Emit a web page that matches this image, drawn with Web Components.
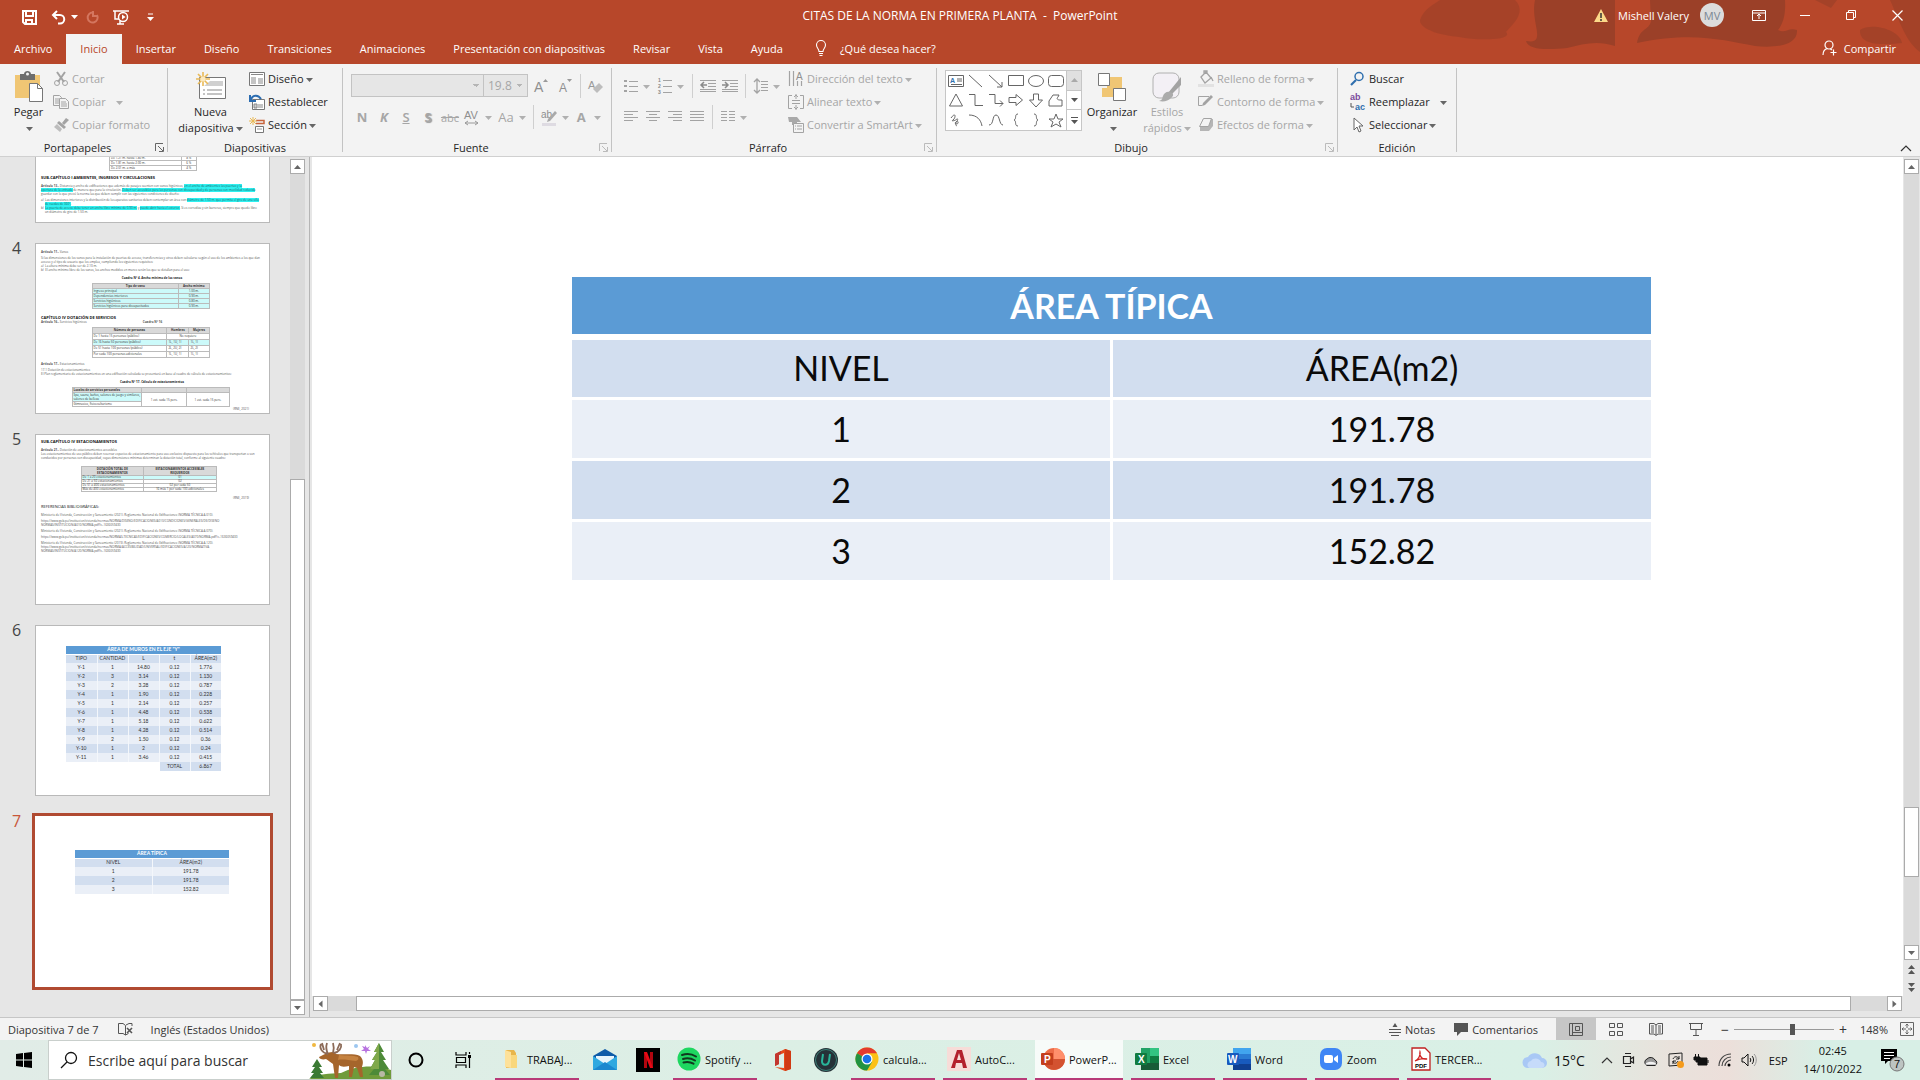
<!DOCTYPE html>
<html lang="es">
<head>
<meta charset="UTF-8">
<meta name="viewport" content="width=device-width, initial-scale=1">
<title>CITAS DE LA NORMA EN PRIMERA PLANTA - PowerPoint</title>
<style>
  html, body { height: 100%; margin: 0; }
  body {
    font-family: "Open Sans", "Noto Sans", sans-serif;
    font-size: 11px;
    color: #262626;
    background: #e6e6e6;
    overflow: hidden;
  }
</style>
</head>
<body>
<power-point></power-point>

<script>
// name: [width, height, markup]
const ICONS = {
  caret: [7, 4, '<path d="M0 0h7L3.500 4z" fill="currentColor"/>'],
  save: [15, 15, '<path d="M1 1h13v13H3l-2-2z M4 1v5h7V1 M4 14v-4h6v4" fill="none" stroke="#fff" stroke-width="2"/>'],
  undo: [15, 15, '<path d="M2 5h7a4 4 0 0 1 0 8.500H7" fill="none" stroke="#fff" stroke-width="2"/><path d="M6 1 2 5l4 4" fill="none" stroke="#fff" stroke-width="2"/>'],
  redo: [15, 15, '<path d="M8 2.500A5 5 0 1 0 12 5" fill="none" stroke="#d4765f" stroke-width="2"/><path d="M8 1v5h5" fill="none" stroke="#d4765f" stroke-width="2"/>'],
  present: [18, 17, '<path d="M1 2h16M3 2v8h5M5 15h7M8 12v3" fill="none" stroke="#fff" stroke-width="1.500"/><circle cx="11" cy="8" r="4.500" fill="#b7472a" stroke="#fff" stroke-width="1.500"/><path d="M10 5.500v5l3.500-2.500z" fill="#fff"/>'],
  more: [7, 8, '<path d="M1 1h5" stroke="#fff"/><path d="M0 4h7L3.500 8z" fill="#fff"/>'],
  warn: [14, 13, '<path d="M7 0l7 13H0z" fill="#fcd98a"/><path d="M7 4v5M7 10v2" stroke="#333" stroke-width="1.500"/>'],
  ribbonopt: [14, 11, '<path d="M.500.500h13v10H.500zM.500 3h13M7 9V4M5 6l2-2 2 2" fill="none" stroke="#fff"/>'],
  min: [11, 11, '<path d="M0 5.500h10" stroke="#fff"/>'],
  restore: [11, 11, '<path d="M.500 2.500h7v7h-7zM2.500 2V.500h7v7H8" fill="none" stroke="#fff"/>'],
  close: [11, 11, '<path d="M.500.500l10 10M10.500.500l-10 10" stroke="#fff" stroke-width="1.200"/>'],
  bulb: [12, 16, '<path d="M4 11.500C4 9 1.500 8 1.500 5a4.500 4.500 0 0 1 9 0c0 3-2.500 4-2.500 6.500zM4 13.500h4M4.500 15.500h3" fill="none" stroke="#fff" stroke-width="1.100"/>'],
  share: [15, 16, '<circle cx="7" cy="5" r="4" fill="none" stroke="#fff" stroke-width="1.200"/><path d="M1 15c0-4 2-6 4.500-6.500M8 9c1 .200 1.500.500 2 1M11.500 9.500v6M8.500 12.500h6" fill="none" stroke="#fff" stroke-width="1.200"/>'],
  paste: [30, 32, '<path d="M1 4h25v23H1z" fill="#f0c674"/><path d="M6 3h4c0-4 7-4 7 0h4v6H6z" fill="#6d6d6d"/><circle cx="13.500" cy="3" r="1.500" fill="#f3f3f3"/><path d="M15.500 12.500h8l5 5v13h-13z" fill="#fff" stroke="#777"/><path d="M23.500 12.500v5h5" fill="none" stroke="#777"/>'],
  cut: [16, 16, '<path d="M4 1l7 10M12 1L5 11" stroke="#a3a3a3" stroke-width="2"/><circle cx="4" cy="12" r="2.500" fill="none" stroke="#a3a3a3"/><circle cx="12" cy="12" r="2.500" fill="none" stroke="#a3a3a3"/>'],
  copy: [16, 16, '<path d="M.500 1.500h6l2 2v8h-8z" fill="#f3f3f3" stroke="#a3a3a3"/><path d="M2 5h4M2 7h4M2 9h4" stroke="#a3a3a3"/><path d="M6.500 4.500h6l3 3v7h-9z" fill="#f3f3f3" stroke="#a3a3a3"/><path d="M8 8h5M8 10h6M8 12h6" stroke="#a3a3a3"/>'],
  brush: [16, 16, '<path d="M13 1l3 2-5 5-2-2z" fill="#a3a3a3"/><path d="M6 4l7 6-2 2-7-6z" fill="#a3a3a3"/><path d="M4 7l5 5-2 3-6-5z" fill="#bdbdbd"/>'],
  newslide: [32, 30, '<path d="M4.500 5.500h26v21h-26z" fill="#fff" stroke="#777"/><path d="M15 9h13v5H9z" fill="#d0d0d0"/><path d="M8 18h2m2 0h15M8 22h2m2 0h15" stroke="#888"/><path d="M8 0v14M1 7h14M3 2l10 10M13 2L3 12" stroke="#e9b957" stroke-width="1.600"/><circle cx="8" cy="7" r="2.500" fill="#fbe9c0"/>'],
  layout: [16, 16, '<path d="M.500 1.500h15v13H.500z" fill="#fff" stroke="#777"/><path d="M2 3.500h12M9 8h5M9 10h5M9 12h5" stroke="#888"/><path d="M2 6h5v7H2z" fill="#c4c4c4"/>'],
  reset: [16, 16, '<path d="M3.500 5.500h12v10h-12z" fill="#fff" stroke="#777"/><path d="M5 10h3v4H5zM9 11h5M9 13h5" fill="#ccc" stroke="#888"/><path d="M2 6C3 1 9 0 12 5M1 1v6h6" fill="none" stroke="#2b6cb0" stroke-width="2"/>'],
  section: [16, 16, '<path d="M7 3.500h8v3H7" fill="none" stroke="#c8643c" stroke-width="1.500"/><path d="M6.500 9.500h8v6h-8z" fill="#fff" stroke="#777"/><path d="M8 12h5" stroke="#999"/><path d="M4 0v8M0 4h8M1 1l6 6M7 1L1 7" stroke="#e9b957"/>'],
  grow: [14, 16, '<text x="0" y="14" font-size="14" fill="#8f8f8f">A</text><path d="M9 4l2.500-3L14 4z" fill="#9a9a9a"/>'],
  shrink: [14, 16, '<text x="1" y="14" font-size="12" fill="#8f8f8f">A</text><path d="M9 1l2.500 3L14 1z" fill="#9a9a9a"/>'],
  eraser: [16, 16, '<text x="0" y="11" font-size="11" fill="#999">A</text><path d="M11 5l4 4-6 6-4-4z" fill="#bdbdbd"/>'],
  spacing: [16, 18, '<text x="0" y="11" font-size="11" fill="#8f8f8f">AV</text><path d="M1 15h13M4 13l-3 2 3 2M11 13l3 2-3 2" fill="none" stroke="#999"/>'],
  marker: [16, 18, '<text x="0" y="10" font-size="10" fill="#8f8f8f">ab</text><path d="M14 3l2 2-7 8-3 1 1-3z" fill="#a9a9a9"/><path d="M1 15h14v3H1z" fill="#dedbe2"/>'],
  bullets: [14, 14, '<path d="M0 1h3v2H0zM0 6h3v2H0zM0 11h3v2H0z" fill="#a3a3a3"/><path d="M5 2.500h9M5 7.500h9M5 12.500h9" stroke="#a3a3a3"/>'],
  numbers: [14, 18, '<g font-size="5" font-weight="700" fill="#888"><text x="0" y="5">1</text><text x="0" y="11">2</text><text x="0" y="17">3</text></g><path d="M5 3.500h9M5 9.500h9M5 15.500h9" stroke="#a3a3a3"/>'],
  outdent: [16, 14, '<path d="M0 1.500h16M8 4.500h8M8 7.500h8M0 10.500h16M0 12.500h16" stroke="#a3a3a3"/><path d="M7 6H1M4 3L1 6l3 3" fill="none" stroke="#8a8a8a" stroke-width="1.500"/>'],
  indent: [16, 14, '<path d="M0 1.500h16M8 4.500h8M8 7.500h8M0 10.500h16M0 12.500h16" stroke="#a3a3a3"/><path d="M0 6h6M3 3l3 3-3 3" fill="none" stroke="#8a8a8a" stroke-width="1.500"/>'],
  linespace: [14, 16, '<path d="M3 1v14M0 4l3-3 3 3M0 12l3 3 3-3" fill="none" stroke="#a3a3a3" stroke-width="1.300"/><path d="M7 3.500h7M7 6.500h7M7 9.500h7M7 12.500h7" stroke="#a3a3a3"/>'],
  left: [14, 14, '<path d="M0 1.500h14M0 4.500h9M0 7.500h14M0 10.500h9" stroke="#a3a3a3" stroke-width="1.200"/>'],
  center: [14, 14, '<path d="M0 1.500h14M3 4.500h8M0 7.500h14M3 10.500h8" stroke="#a3a3a3" stroke-width="1.200"/>'],
  right: [14, 14, '<path d="M0 1.500h14M5 4.500h9M0 7.500h14M5 10.500h9" stroke="#a3a3a3" stroke-width="1.200"/>'],
  justify: [14, 14, '<path d="M0 1.500h14M0 4.500h14M0 7.500h14M0 10.500h14" stroke="#a3a3a3" stroke-width="1.200"/>'],
  columns: [14, 14, '<path d="M0 1.500h6M0 4.500h6M0 7.500h6M0 10.500h6M8 1.500h6M8 4.500h6M8 7.500h6M8 10.500h6" stroke="#a3a3a3" stroke-width="1.200"/>'],
  textdir: [16, 16, '<path d="M1.500 0v15M5.500 0v15M9.500 10v5M13.500 10v5" stroke="#a3a3a3" stroke-width="1.200"/><text x="8" y="9" font-size="10" fill="#8f8f8f">A</text>'],
  textalign: [16, 16, '<path d="M4 1.500H.500v13H4M12 1.500h3.500v13H12" fill="none" stroke="#a3a3a3"/><path d="M8 0v5M6 3l2-2 2 2M8 11v5M6 13l2 2 2-2M4 6.500h8M4 9.500h8" fill="none" stroke="#a3a3a3"/>'],
  smartart: [16, 16, '<path d="M0 0h9l4 5H9v3H4V5H1z" fill="#a9a9a9"/><path d="M5.500 6.500h10v9h-10z" fill="#f3f3f3" stroke="#a3a3a3"/><path d="M7 9h1m1 0h5M7 12h1m1 0h5" stroke="#a3a3a3"/>'],
  arrange: [28, 28, '<path d="M9 4h15v14H9zM4 15h12v9H4z" fill="#f0c674"/><path d="M.500.500h11v12H.500zM15.500 15.500h12v12h-12z" fill="#fff" stroke="#777"/>'],
  styles: [30, 30, '<rect x="1" y="1" width="26" height="25" rx="6" fill="#f3f0f5" stroke="#b0b0b0"/><path d="M29 5v8L19 23l-3-2z" fill="#a3a3a3"/><path d="M18 20c4 1 4 4 1 6-3 3-7 4-12 3 4-1 3-3 4-5 1-3 4-5 7-4z" fill="#ababab"/>'],
  fill: [16, 16, '<path d="M3 6l5-5 5 6-6 5zM6 3V0h3v3M13 6l2 4" fill="none" stroke="#a3a3a3" stroke-width="1.300"/><path d="M0 13h16v3H0z" fill="#e2e2e2"/>'],
  outline: [16, 16, '<path d="M11 2.500H.500v9H4" fill="none" stroke="#a3a3a3"/><path d="M13 1l2 2-8 8-3 1 1-3z" fill="#a3a3a3"/>'],
  effects: [16, 16, '<path d="M5 2h10v7l-4 5H2V9z" fill="#b5b5b5"/><path d="M5.500 1.500h8l-3 8h-9z" fill="#f3f3f3" stroke="#a3a3a3"/>'],
  find: [16, 16, '<circle cx="9" cy="5.500" r="4" fill="none" stroke="#2f6fae" stroke-width="1.500"/><path d="M6 9l-5 5" stroke="#2f6fae" stroke-width="2.200"/>'],
  replace: [16, 20, '<text x="0" y="8" font-size="9" font-weight="700" fill="#7b4a9c">ab</text><text x="5" y="18" font-size="9" font-weight="700" fill="#2f6fae">ac</text><path d="M1 11v4h3" fill="none" stroke="#555"/>'],
  select: [16, 16, '<path d="M4 1v12l3-3 2 5 2-1-2-5h4z" fill="#fff" stroke="#666"/>'],
  launcher: [9, 9, '<path d="M8 .500H.500V8M3 3l5 5M8.500 4v4.500H4" fill="none" stroke="currentColor"/>'],
  chevron: [12, 7, '<path d="M1 6l5-5 5 5" fill="none" stroke="#333" stroke-width="1.200"/>'],
  spell: [15, 14, '<path d="M7.500 13L5 11.500H.500v-10H5l2.500 2zM8 3l3-1.500h3V4M7.500 13l3-1.500" fill="none" stroke="#555"/><path d="M9 6l5 5M14 6l-5 5" stroke="#555" stroke-width="1.600"/>'],
  notes: [12, 13, '<path d="M3.500 4L6 0l2.500 4z" fill="#555"/><path d="M0 6.500h12M0 9.500h12M2 12.500h8" stroke="#555"/>'],
  comment: [14, 13, '<path d="M0 0h14v9H7l-4 4V9H0z" fill="#555"/>'],
  normal: [14, 13, '<path d="M.500.500h13v12H.500zM3.500.500v12M6.500 3.500h4v4h-4zM3 9.500h10" fill="none" stroke="#555"/>'],
  sorter: [14, 13, '<path d="M.500.500h5v4h-5zM8.500.500h5v4h-5zM.500 8.500h5v4h-5zM8.500 8.500h5v4h-5z" fill="none" stroke="#555"/>'],
  reading: [14, 13, '<path d="M7 12.500L5 11H.500V.500H5l2 1.500 2-1.500h4.500V11H9zM7 2v10M2 3h3M2 5h3M2 7h3M2 9h3M9 3h3M9 5h3M9 7h3M9 9h3" fill="none" stroke="#555"/>'],
  show: [14, 13, '<path d="M0 .500h14M1.500.500v6h11v-6M7 7v5M4 12.500h6" fill="none" stroke="#555"/>'],
  fit: [14, 14, '<path d="M.500.500h13v13H.500zM7 2v4M7 8v4M2 7h4M8 7h4M5.500 3.500L7 2l1.500 1.500M5.500 10.500L7 12l1.500-1.500M3.500 5.500L2 7l1.500 1.500M10.500 5.500L12 7l-1.500 1.500" fill="none" stroke="#666"/>'],
  windows: [16, 16, '<path d="M0 2l7-1v6.500H0zM8 1l8-1v7.500H8zM0 8.500h7V15l-7-1zM8 8.500h8V16l-8-1z" fill="#000"/>'],
  search: [18, 18, '<circle cx="11" cy="7" r="5.500" fill="none" stroke="#111" stroke-width="1.300"/><path d="M7 11l-6 6" stroke="#111" stroke-width="1.300"/>'],
  cortana: [16, 16, '<circle cx="8" cy="8" r="6.500" fill="none" stroke="#000" stroke-width="2"/>'],
  taskview: [18, 16, '<path d="M1 0v3h10V0M1 16v-3h10v3M1.500 5.500h9v5h-9zM14.500 0v2M14.500 6v10" fill="none" stroke="#000" stroke-width="1.200"/><path d="M13 3h3v3h-3z"/>'],
  folder: [24, 24, '<path d="M7 3h8l2 3v15H7z" fill="#e8b64c"/><path d="M6 3l6 2v16l-6-1z" fill="#fde19a"/><path d="M12 8h6v13h-6z" fill="#f9d77c"/>'],
  mail: [26, 24, '<path d="M1 8L13 1l12 7v14H1z" fill="#0f5ba8"/><path d="M4 8h18v9H4z" fill="#e7f4fb"/><path d="M1 8l12 8 12-8v14H1z" fill="#2fa8e0"/><path d="M1 22l12-8 12 8z" fill="#1b87cf"/>'],
  netflix: [24, 24, '<path d="M0 0h24v24H0z"/><path d="M8 4h3v16H8zM14 4h3v16h-3z" fill="#b1060f"/><path d="M8 4h3l6 16h-3z" fill="#e50914"/>'],
  spotify: [24, 24, '<circle cx="12" cy="12" r="11.500" fill="#1ed760"/><path d="M5 8c5-1.500 10-1 14 1.500M6 12c4-1.200 8-.800 12 1.500M6.500 15.500c4-1 7-.500 10 1.200" fill="none" stroke="#10391f" stroke-width="2" stroke-linecap="round"/>'],
  office: [24, 24, '<path d="M4 6l10-5 6 2v18l-6 2-10-4 9 1V5L8 7v9l-4 2z" fill="#e64a19"/><path d="M14 1l6 2v18l-6 2z" fill="#d03a12"/><path d="M4 6l6-3v3L8 7v9l-4 2z" fill="#c2362f"/>'],
  ubadge: [24, 24, '<circle cx="12" cy="12" r="12" fill="#253238"/><circle cx="12" cy="12" r="10.500" fill="none" stroke="#3c7f76"/><path d="M9 6l-1 7c0 5 6 5 7 0l1-7" fill="none" stroke="#29b59a" stroke-width="2"/>'],
  chrome: [24, 24, '<circle cx="12" cy="12" r="11.500" fill="#fbc116"/><path d="M12 12L2 6.200A11.500 11.500 0 0 1 22 6.200H12z" fill="#e33b2e"/><path d="M2 6.200A11.500 11.500 0 0 0 12 23.500l5-8.600L12 12z" fill="#229342"/><circle cx="12" cy="12" r="5.500" fill="#fff"/><circle cx="12" cy="12" r="4.300" fill="#1a73e8"/>'],
  autocad: [24, 24, '<path d="M0 0h24v24H0z" fill="#f7dcd8"/><path d="M4 21L10 3h5l5 18h-4l-1-5H9l-1 5zM10 13h4l-2-7z" fill="#b3202c" fill-rule="evenodd"/>'],
  powerpoint: [24, 24, '<circle cx="13" cy="12" r="11" fill="#ed6c47"/><path d="M13 1a11 11 0 0 1 11 11H13z" fill="#ff8f6b"/><path d="M2 12h22a11 11 0 0 1-20 6z" fill="#d35230"/><rect y="6" width="12" height="12" rx="1" fill="#c43e1c"/><text x="3" y="16" font-size="10" font-weight="700" fill="#fff">P</text>'],
  excel: [24, 24, '<path d="M6 1h9v22H6z" fill="#21a366"/><path d="M15 1h9v8h-9z" fill="#33c481"/><path d="M15 9h9v7h-9z" fill="#107c41"/><path d="M6 16h18v7H6z" fill="#185c37"/><rect y="6" width="12" height="12" rx="1" fill="#107c41"/><text x="3" y="16" font-size="10" font-weight="700" fill="#fff">X</text>'],
  word: [24, 24, '<path d="M6 1h18v6H6z" fill="#41a5ee"/><path d="M6 7h18v5H6z" fill="#2b7cd3"/><path d="M6 12h18v5H6z" fill="#185abd"/><path d="M6 17h18v6H6z" fill="#103f91"/><rect y="6" width="12" height="12" rx="1" fill="#185abd"/><text x="1" y="16" font-size="10" font-weight="700" fill="#fff">W</text>'],
  zoom: [24, 24, '<rect x="1" y="1" width="22" height="22" rx="7" fill="#3f86f5"/><rect x="5" y="8" width="9" height="8" rx="2" fill="#fff"/><path d="M15 11l4-3v8l-4-3z" fill="#fff"/>'],
  pdf: [20, 24, '<path d="M1 1h13l5 5v17H1z" fill="#fff" stroke="#c02020" stroke-width="1.300"/><path d="M4 14c3-1 6-6 5-9-1 5 3 8 7 7-4-1-8 0-12 2z" fill="none" stroke="#d02020" stroke-width="1.300"/><text x="4" y="21" font-size="6" font-weight="700">PDF</text>'],
  cloud: [26, 18, '<path d="M6 17a5.500 5.500 0 0 1 0-11 8 8 0 0 1 14 1 5 5 0 0 1 0 10z" fill="#a9c8f5"/><path d="M8 17c-3 0-4-6 1-7 2-4 9-3 10 1 4 0 5 5 1 6z" fill="#c6dbfa"/>'],
  meet: [12, 16, '<path d="M3 1.500h6M3 14.500h6M1.500 4.500h7v7h-7zM8.500 7l3-2v6l-3-2" fill="none" stroke="#222" stroke-width="1.200"/>'],
  onedrive: [16, 11, '<path d="M4 10.500a3.500 3.500 0 0 1 0-6.500 5 5 0 0 1 8 1 3 3 0 0 1 0 5.500z" fill="#999" stroke="#222"/><path d="M2 9.500c2-3 8-4 12 0z" fill="#f4f4f4"/>'],
  sync: [16, 16, '<path d="M1 2l13-1v12l-13 1z" fill="none" stroke="#222"/><path d="M5 7c1-3 5-3 6 0M10 9c-1 3-5 3-5 0M11 4v3H8M5 12V9h3" fill="none" stroke="#222"/><circle cx="12.500" cy="12.500" r="3.500" fill="#f59b1c"/>'],
  battery: [16, 12, '<path d="M5 4h9v7H5zM15 6v3" fill="#111" stroke="#111"/><path d="M2.500 0v3M5.500 0v3M1 3h6v3H5v2H3V6H1z" fill="#111" stroke="#111"/>'],
  wifi: [14, 14, '<path d="M1 13C1 6 6 1 13 1M4 13c0-5 4-9 9-9M7 13c0-3 3-6 6-6" fill="none" stroke="#444" stroke-width="1.200"/><circle cx="11" cy="12" r="1.500"/>'],
  volume: [16, 14, '<path d="M1 5v4h2l4 4V1L3 5z" fill="none" stroke="#111"/><path d="M9 5c1 1 1 3 0 4M11 3c2 2 2 6 0 8" fill="none" stroke="#111"/><path d="M13 1c3 3 3 9 0 12" fill="none" stroke="#999"/>'],
  notify: [26, 24, '<path d="M1 1h16v12h-9l-3 3v-3H1z"/><path d="M4 4.500h10M4 7.500h10M4 10.500h6" stroke="#fff"/><circle cx="17" cy="16" r="7" fill="#bdc4c2" stroke="#777"/><text x="14" y="20" font-size="11" fill="#111">7</text>'],
  moose: [82, 38, '<path d="M0 38c10-6 20-5 32-6 16-8 36-8 50-3v9z" fill="#6f9b3a"/><path d="M8 18l5 8h-3l4 6h-3l4 5H1l4-5H2l4-6H3z" fill="#3b7a34"/><path d="M70 2l5 9h-3l5 8h-3l6 9h-4l5 6H60l5-6h-4l5-9h-3l5-8h-3z" fill="#4d8a38"/><path d="M70 2l-5 9h3l-5 8h3l-5 9h9z" fill="#7fa84a"/><path d="M16 13c5-2 9-3 11 0 8 1 18-1 24 2 4 4 3 8 2 11l1 10h-3l-3-9-3-1-2 10h-3V25c-5 1-8 1-10-1l-1 13h-3l-2-14c-3-2-5-4-7-5-3 1-7 0-7-2z" fill="#a5652b"/><path d="M30 14c8 1 14 0 19 2 1 2 0 3-2 4-8-1-14-2-18-1z" fill="#c58240"/><path d="M19 13C13 12 10 7 12 3M19 13c-2-4-2-8-1-11M15 9l-2-7M25 12c5-1 8-5 7-9M24 12c1-4 1-7 0-10M28 9l3-7" fill="none" stroke="#8c6b58" stroke-width="1.800"/><circle cx="5" cy="4" r="2" fill="#f0b840"/><circle cx="47" cy="5" r="2" fill="#9cc7f0"/><path d="M56 4l2 3 3-2-2 3 3 2-4 0-1 3-1-3-4 0 3-2-2-3 3 1z" fill="#b873e0"/><circle cx="73" cy="33" r="3" fill="#b8b8a4"/>'],
  // shapes gallery
  g_text: [16, 12, '<path d="M.500.500h15v11H.500zM9 4h5M9 6h5M3 9.500h11" fill="none" stroke="#666"/><text x="2" y="8" font-size="7" font-weight="700" fill="#2f6fae">A</text>'],
  g_line: [16, 14, '<path d="M1 1l13 12" stroke="#666"/>'],
  g_arrow: [16, 14, '<path d="M1 1l13 12M14 8v5H9" fill="none" stroke="#666"/>'],
  g_rect: [16, 12, '<path d="M.500.500h15v10H.500z" fill="none" stroke="#666"/>'],
  g_oval: [16, 12, '<ellipse cx="8" cy="6" rx="7.500" ry="5.500" fill="none" stroke="#666"/>'],
  g_round: [16, 12, '<rect x=".500" y=".500" width="15" height="11" rx="3" fill="none" stroke="#666"/>'],
  g_tri: [16, 14, '<path d="M8 1l6.500 12h-13z" fill="none" stroke="#666"/>'],
  g_elbow: [16, 14, '<path d="M1 1.500h6v11h8" fill="none" stroke="#666"/>'],
  g_elbow2: [16, 14, '<path d="M1 1.500h6v9h8M12 7.500l3 3-3 3" fill="none" stroke="#666"/>'],
  g_right: [16, 14, '<path d="M1 4.500h7v-3l6.500 5.500L8 12.500v-3H1z" fill="none" stroke="#666"/>'],
  g_down: [16, 15, '<path d="M5.500 1v6h-4L8 14l6.500-7h-4V1z" fill="none" stroke="#666"/>'],
  g_free: [16, 14, '<path d="M1 8l4-6h6l-1 2c-2 2 0 3 2 3h2v6H1z" fill="none" stroke="#666"/>'],
  g_scrib: [16, 14, '<path d="M3 5c5-7 5 0 2 2s4 0 4-1 2 1-1 3 3 3 2 0-4 3-1 4" fill="none" stroke="#666"/>'],
  g_arc: [16, 14, '<path d="M1 2c8 0 12 5 13 11" fill="none" stroke="#666"/>'],
  g_curve: [16, 14, '<path d="M1 12C6 12 4 2 8 2s3 10 7 10" fill="none" stroke="#666"/>'],
  g_lbrace: [16, 14, '<path d="M10 1c-4 0-1 5-4 6 3 1 0 6 4 6" fill="none" stroke="#666"/>'],
  g_rbrace: [16, 14, '<path d="M6 1c4 0 1 5 4 6-3 1 0 6-4 6" fill="none" stroke="#666"/>'],
  g_star: [16, 15, '<path d="M8 1l2 5h5l-4 3 2 5-5-3-5 3 2-5-4-3h5z" fill="none" stroke="#666"/>']
};

class UiIcon extends HTMLElement {
  constructor() {
    super();
    this.attachShadow({ mode: "open" });
  }

  connectedCallback() {
    const [w, h, body] = ICONS[this.getAttribute("name")];
    this.shadowRoot.innerHTML = `
      <style>
        :host { display: inline-flex; flex: none; vertical-align: middle; }
        svg { display: block; overflow: visible; font-family: "Liberation Sans", sans-serif; }
      </style>
      <svg width="${w}" height="${h}" viewBox="0 0 ${w} ${h}" aria-hidden="true">${body}</svg>
    `;
  }
}
customElements.define("ui-icon", UiIcon);

const icon = (name) => `<ui-icon name="${name}"></ui-icon>`;

class TitleBar extends HTMLElement {
  constructor() {
    super();
    this.attachShadow({ mode: "open" });
  }

  connectedCallback() {
    this.shadowRoot.innerHTML = `
      <style>
        :host { display: block; color: white; }
        .bar { display: grid; grid-template-columns: 1fr auto 1fr; align-items: center; height: 34px; }
        button { border: 0; padding: 0; background: none; color: inherit; font: inherit; display: flex; align-items: center; justify-content: center; }
        .quick { display: flex; align-items: center; padding: 0 20px; height: 32px; }
        .quick button { width: 18px; height: 20px; }
        .quick .undo { width: 36px; margin-left: 8px; gap: 5px; }
        .quick .redo { margin-left: 1px; }
        .quick .show { margin-left: 11px; }
        .quick .more { margin-left: 11px; }
        h1 { margin: 0; font-size: 12px; line-height: 16px; font-weight: 400; white-space: pre; padding-bottom: 3px; }
        .user { display: flex; align-items: center; justify-content: flex-end; height: 30px; align-self: start; }
        .name { margin: 0 11px 0 10px; }
        .avatar { width: 24px; height: 24px; border-radius: 50%; background: #dcdcdc; color: #7a8794; margin-right: 12px; }
        .win { width: 46px; height: 30px; }
      </style>
      <div class="bar">
        <div class="quick">
          <button aria-label="Guardar">${icon("save")}</button>
          <button class="undo" aria-label="Deshacer">${icon("undo")}${icon("caret")}</button>
          <button class="redo" aria-label="Rehacer">${icon("redo")}</button>
          <button class="show" aria-label="Presentación desde el principio">${icon("present")}</button>
          <button class="more" aria-label="Personalizar">${icon("more")}</button>
        </div>
        <h1><slot></slot></h1>
        <div class="user">
          ${icon("warn")}
          <span class="name">Mishell Valery</span>
          <button class="avatar">MV</button>
          <button class="win" aria-label="Opciones de la cinta">${icon("ribbonopt")}</button>
          <button class="win" aria-label="Minimizar">${icon("min")}</button>
          <button class="win" aria-label="Restaurar">${icon("restore")}</button>
          <button class="win" aria-label="Cerrar">${icon("close")}</button>
        </div>
      </div>
    `;
  }
}
customElements.define("title-bar", TitleBar);

class TabStrip extends HTMLElement {
  constructor() {
    super();
    this.attachShadow({ mode: "open" });
  }

  connectedCallback() {
    const tabs = ["Archivo", "Inicio", "Insertar", "Diseño", "Transiciones", "Animaciones",
      "Presentación con diapositivas", "Revisar", "Vista", "Ayuda"];
    this.shadowRoot.innerHTML = `
      <style>
        :host { display: flex; height: 30px; color: white; }
        button { border: 0; background: none; color: inherit; font: inherit; padding: 0 14px 2px; display: flex; align-items: center; white-space: nowrap; }
        button.on { background: #f3f3f3; color: #b7472a; }
        .ask { margin-left: 4px; gap: 13px; }
        .share { margin-left: auto; padding-right: 24px; gap: 7px; }
      </style>
      ${tabs.map((t) => `<button role="tab" class="${t === "Inicio" ? "on" : ""}">${t}</button>`).join("")}
      <button class="ask">${icon("bulb")}¿Qué desea hacer?</button>
      <button class="share">${icon("share")}Compartir</button>
    `;
  }
}
customElements.define("tab-strip", TabStrip);

class RibbonButton extends HTMLElement {
  constructor() {
    super();
    this.attachShadow({ mode: "open" });
  }

  connectedCallback() {
    const name = this.getAttribute("icon");
    this.shadowRoot.innerHTML = `
      <style>
        :host { display: flex; }
        button {
          flex: 1; display: flex; align-items: center; height: 23px; gap: 3px; padding: 0 4px;
          border: 0; background: none; color: #262626; font: inherit; white-space: nowrap;
        }
        button:disabled { color: #a6a6a6; }
        .pic { display: flex; justify-content: center; flex: none; }
        :host([row]) .pic { width: 16px; }
        :host([tall]) button { flex-direction: column; height: 72px; gap: 0; padding: 2px 0 0; }
        :host([tall]) .pic { height: 35px; align-items: center; }
        :host([tall]) .text { line-height: 16px; }
        :host([tool]) button { justify-content: center; padding: 0; gap: 0; }
      </style>
      <button ${this.hasAttribute("disabled") ? "disabled" : ""} aria-label="${this.getAttribute("label") || this.textContent.trim()}">
        ${name ? `<span class="pic">${icon(name)}</span>` : ""}
        <span class="text"><slot></slot></span>
      </button>
    `;
  }
}
customElements.define("ribbon-button", RibbonButton);

class RibbonGroup extends HTMLElement {
  constructor() {
    super();
    this.attachShadow({ mode: "open" });
  }

  connectedCallback() {
    const launcher = this.getAttribute("launcher");
    this.shadowRoot.innerHTML = `
      <style>
        :host { display: flex; flex: none; height: 91px; box-sizing: border-box; padding: 3px 0 0; }
        .main { flex: 1; min-width: 0; display: flex; flex-direction: column; }
        .tools { flex: 1; display: flex; align-items: flex-start; }
        .foot { display: flex; align-items: center; height: 16px; }
        .foot span { flex: 1; text-align: center; }
        .foot button { width: 12px; padding: 0; border: 0; background: none; display: flex; color: #666; }
        .foot button.off { color: #bbb; }
        .rule { width: 1px; background: #c3c3c3; margin: 1px 0 3px; }
      </style>
      <div class="main">
        <div class="tools"><slot></slot></div>
        <div class="foot">
          <span>${this.getAttribute("name")}</span>
          ${launcher ? `<button class="${launcher}" aria-label="Más opciones">${icon("launcher")}</button>` : ""}
        </div>
      </div>
      <div class="rule"></div>
    `;
  }
}
customElements.define("ribbon-group", RibbonGroup);

class ShapeGallery extends HTMLElement {
  constructor() {
    super();
    this.attachShadow({ mode: "open" });
  }

  connectedCallback() {
    const shapes = ["text", "line", "arrow", "rect", "oval", "round", "tri", "elbow", "elbow2",
      "right", "down", "free", "scrib", "arc", "curve", "lbrace", "rbrace", "star"];
    this.shadowRoot.innerHTML = `
      <style>
        :host { display: flex; width: 137px; height: 61px; box-sizing: border-box; border: 1px solid #c6c6c6; background: white; }
        .grid { flex: 1; display: grid; grid-template: repeat(3, 1fr) / repeat(6, 1fr); }
        button { border: 0; padding: 0; background: none; display: flex; align-items: center; justify-content: center; color: #555; }
        .side { width: 15px; display: grid; grid-template-rows: repeat(3, 1fr); }
        .side button { border-left: 1px solid #c6c6c6; border-bottom: 1px solid #c6c6c6; }
        .side button:first-child { background: #e0e0e0; color: #aaa; }
        .side button:first-child ui-icon { rotate: 180deg; }
        .side button:last-child { border-bottom: 0; flex-direction: column; gap: 2px; }
        .side button:last-child::before { content: ""; width: 7px; height: 1px; background: #555; }
      </style>
      <div class="grid">${shapes.map((s) => `<button aria-label="Forma">${icon("g_" + s)}</button>`).join("")}</div>
      <div class="side">
        <button aria-label="Subir">${icon("caret")}</button>
        <button aria-label="Bajar">${icon("caret")}</button>
        <button aria-label="Más">${icon("caret")}</button>
      </div>
    `;
  }
}
customElements.define("shape-gallery", ShapeGallery);

class RibbonBar extends HTMLElement {
  constructor() {
    super();
    this.attachShadow({ mode: "open" });
  }

  connectedCallback() {
    const caret = icon("caret");
    this.shadowRoot.innerHTML = `
      <style>
        :host { display: flex; background: #f3f3f3; border-bottom: 1px solid #d0d0d0; padding-bottom: 1px; }
        .portapapeles { width: 168px; }
        .diapositivas { width: 175px; }
        .fuente { width: 269px; }
        .parrafo { width: 325px; }
        .dibujo { width: 401px; }
        .edicion { width: 119px; }
        .col { display: flex; flex-direction: column; align-items: stretch; }
        .rows { display: flex; flex-direction: column; gap: 8px; padding: 7px 0 0 8px; }
        .line { display: flex; align-items: center; height: 23px; }
        .sep { width: 1px; height: 24px; background: #cfcfcf; margin: 0 4px; }
        ui-icon[name="caret"] { margin-left: 2px; color: #666; }
        [disabled] ui-icon[name="caret"] { color: #b0b0b0; }
        [tool] ui-icon[name="caret"] { margin-left: 5px; }
        [tall] { text-align: center; }
        .paste { width: 49px; padding-left: 8px; box-sizing: border-box; }
        .new { width: 77px; padding-left: 8px; box-sizing: border-box; }
        .far { margin-left: 8px; }
        .w22 { width: 22px; }
        .w26 { width: 26px; }
        .w34 { width: 34px; }
        .letters { font-size: 13px; }
        .bold { font-weight: 700; }
        .it { font-weight: 700; font-style: italic; }
        .un { text-decoration: underline; font-weight: 600; }
        .sh { text-shadow: 1px 1px 1px #999; font-weight: 700; }
        .st { text-decoration: line-through; font-size: 11px; }
        select {
          height: 23px; width: 133px; box-sizing: border-box; border: 1px solid #c3c3c3; border-radius: 0;
          color: #a6a6a6; font: inherit; font-size: 12px; appearance: none; opacity: 1; padding: 0 4px;
          background: #e6e6e6 linear-gradient(to bottom left, #b5b5b5 50%, transparent 50%) right 7px center / 3px 3px no-repeat;
          background-image: linear-gradient(to bottom left, #b5b5b5 50%, transparent 50%), linear-gradient(to bottom right, #b5b5b5 50%, transparent 50%);
          background-position: right 7px center, right 4px center;
        }
        select.size { width: 45px; margin-left: -1px; }
        .art { margin: 3px 2px 0 8px; }
        .organize { width: 56px; }
        .styles { width: 54px; }
        .ed { margin-left: 8px; }
        .fold { margin: auto 8px 3px auto; border: 0; padding: 0; background: none; display: flex; }
      </style>

      <ribbon-group class="portapapeles" name="Portapapeles" launcher="on">
        <ribbon-button class="paste" tall icon="paste">Pegar<br>${caret}</ribbon-button>
        <div class="col">
          <ribbon-button row disabled icon="cut">Cortar</ribbon-button>
          <ribbon-button row disabled icon="copy">Copiar<span class="far">${caret}</span></ribbon-button>
          <ribbon-button row disabled icon="brush">Copiar formato</ribbon-button>
        </div>
      </ribbon-group>

      <ribbon-group class="diapositivas" name="Diapositivas">
        <ribbon-button class="new" tall icon="newslide">Nueva<br>diapositiva${caret}</ribbon-button>
        <div class="col">
          <ribbon-button row icon="layout">Diseño${caret}</ribbon-button>
          <ribbon-button row icon="reset">Restablecer</ribbon-button>
          <ribbon-button row icon="section">Sección${caret}</ribbon-button>
        </div>
      </ribbon-group>

      <ribbon-group class="fuente" name="Fuente" launcher="off">
        <div class="rows">
          <div class="line">
            <select disabled aria-label="Fuente"><option></option></select>
            <select class="size" disabled aria-label="Tamaño de fuente"><option>19.8</option></select>
            <ribbon-button class="w26" tool disabled icon="grow" label="Aumentar"></ribbon-button>
            <ribbon-button class="w22" tool disabled icon="shrink" label="Disminuir"></ribbon-button>
            <div class="sep"></div>
            <ribbon-button class="w22" tool disabled icon="eraser" label="Borrar formato"></ribbon-button>
          </div>
          <div class="line letters">
            <ribbon-button class="w22" tool disabled><span class="bold">N</span></ribbon-button>
            <ribbon-button class="w22" tool disabled><span class="it">K</span></ribbon-button>
            <ribbon-button class="w22" tool disabled><span class="un">S</span></ribbon-button>
            <ribbon-button class="w22" tool disabled><span class="sh">S</span></ribbon-button>
            <ribbon-button class="w22" tool disabled><span class="st">abc</span></ribbon-button>
            <ribbon-button class="w34" tool disabled icon="spacing" label="Espaciado">${caret}</ribbon-button>
            <ribbon-button class="w34" tool disabled>Aa${caret}</ribbon-button>
            <div class="sep"></div>
            <ribbon-button class="w34" tool disabled icon="marker" label="Resaltado">${caret}</ribbon-button>
            <ribbon-button class="w34" tool disabled><b>A</b>&nbsp;${caret}</ribbon-button>
          </div>
        </div>
      </ribbon-group>

      <ribbon-group class="parrafo" name="Párrafo" launcher="off">
        <div class="rows">
          <div class="line">
            <ribbon-button class="w34" tool disabled icon="bullets" label="Viñetas">${caret}</ribbon-button>
            <ribbon-button class="w34" tool disabled icon="numbers" label="Numeración">${caret}</ribbon-button>
            <div class="sep"></div>
            <ribbon-button class="w22" tool disabled icon="outdent" label="Reducir sangría"></ribbon-button>
            <ribbon-button class="w22" tool disabled icon="indent" label="Aumentar sangría"></ribbon-button>
            <div class="sep"></div>
            <ribbon-button class="w34" tool disabled icon="linespace" label="Interlineado">${caret}</ribbon-button>
          </div>
          <div class="line">
            <ribbon-button class="w22" tool disabled icon="left" label="Izquierda"></ribbon-button>
            <ribbon-button class="w22" tool disabled icon="center" label="Centrar"></ribbon-button>
            <ribbon-button class="w22" tool disabled icon="right" label="Derecha"></ribbon-button>
            <ribbon-button class="w22" tool disabled icon="justify" label="Justificar"></ribbon-button>
            <div class="sep"></div>
            <ribbon-button class="w34" tool disabled icon="columns" label="Columnas">${caret}</ribbon-button>
          </div>
        </div>
        <div class="col">
          <ribbon-button row disabled icon="textdir">Dirección del texto${caret}</ribbon-button>
          <ribbon-button row disabled icon="textalign">Alinear texto${caret}</ribbon-button>
          <ribbon-button row disabled icon="smartart">Convertir a SmartArt${caret}</ribbon-button>
        </div>
      </ribbon-group>

      <ribbon-group class="dibujo" name="Dibujo" launcher="off">
        <shape-gallery class="art"></shape-gallery>
        <ribbon-button class="organize" tall icon="arrange">Organizar<br>${caret}</ribbon-button>
        <ribbon-button class="styles" tall disabled icon="styles">Estilos<br>rápidos${caret}</ribbon-button>
        <div class="col">
          <ribbon-button row disabled icon="fill">Relleno de forma${caret}</ribbon-button>
          <ribbon-button row disabled icon="outline">Contorno de forma${caret}</ribbon-button>
          <ribbon-button row disabled icon="effects">Efectos de forma${caret}</ribbon-button>
        </div>
      </ribbon-group>

      <ribbon-group class="edicion" name="Edición">
        <div class="col ed">
          <ribbon-button row icon="find">Buscar</ribbon-button>
          <ribbon-button row icon="replace">Reemplazar<span class="far">${caret}</span></ribbon-button>
          <ribbon-button row icon="select">Seleccionar${caret}</ribbon-button>
        </div>
      </ribbon-group>
      <button class="fold" aria-label="Contraer la cinta">${icon("chevron")}</button>
    `;
  }
}
customElements.define("ribbon-bar", RibbonBar);

// before / thumb / after are the shares of the track
class ScrollBar extends HTMLElement {
  constructor() {
    super();
    this.attachShadow({ mode: "open" });
  }

  connectedCallback() {
    const [before, thumb, after] = this.getAttribute("parts").split(" ");
    this.shadowRoot.innerHTML = `
      <style>
        :host { display: flex; flex-direction: column; width: 15px; }
        :host([across]) { flex-direction: row; width: auto; height: 15px; }
        button { flex: none; width: 15px; height: 15px; padding: 0; box-sizing: border-box; border: 1px solid #ababab; background: white; color: #666; display: flex; align-items: center; justify-content: center; }
        .track { flex: 1; display: flex; flex-direction: inherit; background: #dadada; }
        .thumb { flex: ${thumb}; background: white; border: 1px solid #ababab; box-sizing: border-box; }
        .up ui-icon { rotate: 180deg; }
        :host([across]) .up ui-icon { rotate: 90deg; }
        :host([across]) .down ui-icon { rotate: -90deg; }
      </style>
      <button class="up" aria-label="Anterior">${icon("caret")}</button>
      <div class="track">
        <div style="flex:${before}"></div>
        <div class="thumb"></div>
        <div style="flex:${after}"></div>
      </div>
      <button class="down" aria-label="Siguiente">${icon("caret")}</button>
    `;
  }
}
customElements.define("scroll-bar", ScrollBar);

// Banded table: rows split by ";" and cells by "|". The heading spans all columns.
class SlideTable extends HTMLElement {
  constructor() {
    super();
    this.attachShadow({ mode: "open" });
  }

  connectedCallback() {
    const rows = this.getAttribute("rows").split(";").map((r) => r.split("|"));
    const cols = rows[0].length;
    this.shadowRoot.innerHTML = `
      <style>
        :host { display: block; font-family: Lato, "Open Sans", sans-serif; font-size: 34px; color: #0a0a0a; --row: 61px; --gap: 3px; --head: 60px; --rule: 6px; }
        :host([mini]) { font-size: 5px; color: #333; --row: 9px; --gap: 1px; --head: 8px; --rule: 1px; }
        table { width: 100%; border-collapse: collapse; table-layout: fixed; text-align: center; line-height: 1; }
        th, td { padding: 0; font-weight: 400; height: var(--row); box-sizing: border-box; border: 0 solid white; border-bottom-width: var(--gap); border-right-width: var(--gap); }
        :host([mini]) td { border-color: #f4f7fb; border-bottom-width: 0; }
        th:last-child, td:last-child { border-right-width: 0; }
        thead th { background: #5b9bd5; color: white; font-weight: 700; height: var(--head); border-bottom-width: var(--rule); }
        tr:nth-child(odd) td { background: #d2deef; }
        tr:nth-child(even) td { background: #eaeff7; }
        td.none:empty { background: none !important; border-color: white; }
      </style>
      <table>
        <thead><tr><th colspan="${cols}">${this.getAttribute("heading")}</th></tr></thead>
        <tbody>${rows.map((r) => `<tr>${r.map((c) => `<td class="${c ? "" : "none"}">${c}</td>`).join("")}</tr>`).join("")}</tbody>
      </table>
    `;
  }
}
customElements.define("slide-table", SlideTable);

const AREA = 'heading="ÁREA TÍPICA" rows="NIVEL|ÁREA(m2);1|191.78;2|191.78;3|152.82"';

const PAGES = {
  3: `
    <div class="end">
      <table style="width:88px;margin-left:68px">
        <tr><td>De 1.21 m. hasta 1.80 m.</td><td class="c">8 %</td></tr>
        <tr><td>De 1.81 m. hasta 2.00 m.</td><td class="c">6 %</td></tr>
        <tr><td>De 2.01 m. a más</td><td class="c">4 %</td></tr>
      </table>
      <h2 class="s4">SUB-CAPÍTULO I AMBIENTES, INGRESOS Y CIRCULACIONES</h2>
      <p class="s4"><b>Artículo 13.-</b> Distancia y ancho de edificaciones que además de pasajes cuenten con vanos higiénicos, <mark>en el ancho de ambientes las puertas y la</mark><br><mark>apertura de la entrada</mark> de manera que para la circulación. <mark>Deben ser accesibles para las personas con discapacidad y de personas con movilidad reducida</mark><br>guardar con lo que prevé la norma las que deben cumplir con las siguientes condiciones de diseño:</p>
      <p class="s2">a)&nbsp; Las dimensiones interiores y la distribución de los aparatos sanitarios deben contemplar un área con <mark>diámetro de 1.50 m. que permita el giro de una silla</mark><br>&nbsp; &nbsp; &nbsp;<mark>de ruedas de 360°.</mark></p>
      <p>b)&nbsp; <mark>La puerta de acceso debe tener un ancho libre mínimo de 0.90 m.</mark> y <mark>puede abrir hacia el exterior.</mark> Si es corrediza y sin barreras, siempre que quede libre<br>&nbsp; &nbsp; &nbsp;un diámetro de giro de 1.50 m.</p>
    </div>`,
  4: `
    <p class="s6"><b>Artículo 11.-</b> Vanos</p>
    <p class="s2">Si las dimensiones de los vanos para la instalación de puertas de acceso, transferencias y otros deben calcularse según el uso de los ambientes a los que dan<br>acceso y el tipo de usuario que los emplea, cumpliendo los siguientes requisitos:<br>a)&nbsp; La altura mínima debe ser de 2.10 m.<br>b)&nbsp; El ancho mínimo libre de los vanos, los anchos medidos en muros serán los que se detallan para el uso:</p>
    <h3>Cuadro N° 4. Ancho mínimo de los vanos</h3>
    <table class="cyan t1">
      <tr><th>Tipo de vano</th><th style="width:26%">Ancho mínimo</th></tr>
      <tr><td>Ingreso principal</td><td class="c">1.00 m.</td></tr>
      <tr><td>Dependencias interiores</td><td class="c">0.90 m.</td></tr>
      <tr><td>Servicios higiénicos</td><td class="c">0.80 m.</td></tr>
      <tr><td>Servicios higiénicos para discapacitados</td><td class="c">0.90 m.</td></tr>
    </table>
    <h2 class="s6">CAPÍTULO IV DOTACIÓN DE SERVICIOS</h2>
    <p class="pair"><span><b>Artículo 16.-</b> Servicios higiénicos</span><b>Cuadro N° 16</b></p>
    <table class="t1 tall">
      <tr><th style="width:64%">Número de personas</th><th>Hombres</th><th>Mujeres</th></tr>
      <tr><td>De 1 hasta 15 personas (público)</td><td colspan="2" class="c">No requiere</td></tr>
      <tr class="hl"><td>De 16 hasta 50 personas (público)</td><td>1L, 1U, 1I</td><td>1L, 1I</td></tr>
      <tr><td>De 51 hasta 100 personas (público)</td><td>2L, 2U, 2I</td><td>2L, 2I</td></tr>
      <tr><td>Por cada 100 personas adicionales</td><td>1L, 1U, 1I</td><td>1L, 1I</td></tr>
    </table>
    <p class="s4"><b>Artículo 17.-</b> Estacionamientos</p>
    <p class="s2">17.1 Dotación de estacionamientos<br>El Plan reglamentario de estacionamientos en una edificación calculada se presentará en base al cuadro de cálculo de estacionamientos:</p>
    <h3>Cuadro N° 17. Cálculo de estacionamientos</h3>
    <table class="t2">
      <tr><th style="width:39%;text-align:left">Locales de servicios personales</th><th></th><th style="width:27%"></th></tr>
      <tr><td class="hl">Spa, sauna, baños, salones de juego y similares,<br>salones de belleza</td><td rowspan="2" class="c">1 est. cada 15 pers.</td><td rowspan="2" class="c">1 est. cada 15 pers.</td></tr>
      <tr><td>Gimnasios, fisicoculturismo</td></tr>
    </table>
    <p class="src">(RNE, 2021)</p>`,
  5: `
    <h2 class="s4">SUB-CAPÍTULO IV ESTACIONAMIENTOS</h2>
    <p class="s4"><b>Artículo 21.-</b> Dotación de estacionamientos accesibles<br>Los estacionamientos de uso público deben reservar espacios de estacionamiento para uso exclusivo dispuesto para los vehículos que transportan o son<br>conducidos por personas con discapacidad, cuyas dimensiones mínimas determinan la dotación total, conforme al siguiente cuadro:</p>
    <table class="t3">
      <tr><th>DOTACIÓN TOTAL DE<br>ESTACIONAMIENTOS</th><th>ESTACIONAMIENTOS ACCESIBLES<br>REQUERIDOS</th></tr>
      <tr class="hl"><td>De 1 a 20 estacionamientos</td><td class="c">01</td></tr>
      <tr><td>De 21 a 50 estacionamientos</td><td class="c">02</td></tr>
      <tr><td>De 51 a 400 estacionamientos</td><td class="c">02 por cada 50</td></tr>
      <tr><td>Más de 400 estacionamientos</td><td class="c">16 más 1 por cada 100 adicionales</td></tr>
    </table>
    <p class="src">(RNE, 2019)</p>
    <h2 class="s4 thin">REFERENCIAS BIBLIOGRÁFICAS:</h2>
    <p class="s4">Ministerio de Vivienda, Construcción y Saneamiento (2021). Reglamento Nacional de Edificaciones (NORMA TÉCNICA A.010).</p>
    <p class="s2">https://www.gob.pe/institucion/vivienda/normas/NORMA/DISENO/EDIFICACIONES/A010/CONDICIONES/GENERALES/DE/DISENO<br>NORMAS/INSTITUCION/A010/NORMA.pdf?v=1636059430</p>
    <p class="s2">Ministerio de Vivienda, Construcción y Saneamiento (2021). Reglamento Nacional de Edificaciones (NORMA TÉCNICA A.070).</p>
    <p class="s2">https://www.gob.pe/institucion/vivienda/normas/NORMAS-TECNICAS/EDIFICACIONES/COMERCIO/LOCALES/A070/NORMA.pdf?v=1636059430</p>
    <p class="s2">Ministerio de Vivienda, Construcción y Saneamiento (2019). Reglamento Nacional de Edificaciones (NORMA TÉCNICA A.120).</p>
    <p>https://www.gob.pe/institucion/vivienda/normas/NORMA/ACCESIBILIDAD/UNIVERSAL/EDIFICACIONES/A120/NORMATIVA<br>NORMAS/INSTITUCION/A120/NORMA.pdf?v=1636059430</p>`,
  6: `<slide-table mini style="margin:20px 48px 0 30px" heading="ÁREA DE MUROS EN EL EJE &quot;Y&quot;" rows="TIPO|CANTIDAD|L|t|ÁREA(m2);Y-1|1|14.80|0.12|1.776;Y-2|3|3.14|0.12|1.130;Y-3|2|3.28|0.12|0.787;Y-4|1|1.90|0.12|0.228;Y-5|1|2.14|0.12|0.257;Y-6|1|4.48|0.12|0.538;Y-7|1|5.18|0.12|0.622;Y-8|1|4.28|0.12|0.514;Y-9|2|1.50|0.12|0.36;Y-10|1|2|0.12|0.24;Y-11|1|3.46|0.12|0.415;|||TOTAL|6.867"></slide-table>`,
  7: `<slide-table mini style="margin:33px 40px 0 39px" ${AREA}></slide-table>`
};

class SlideThumb extends HTMLElement {
  constructor() {
    super();
    this.attachShadow({ mode: "open" });
  }

  connectedCallback() {
    const n = this.getAttribute("number");
    this.shadowRoot.innerHTML = `
      <style>
        :host { display: flex; flex: none; color: #444; }
        :host([selected]) { color: #c8563a; }
        .num { width: 23px; font-size: 16px; line-height: 10px; }
        .page {
          flex: 1; min-width: 0; height: 171px; box-sizing: border-box; background: white; border: 1px solid #b9b9b9; overflow: hidden;
          display: flex; flex-direction: column; color: #555; font: 3px/4px "Open Sans", sans-serif; padding: 0 6px 0 5px; white-space: nowrap;
        }
        :host([selected]) .page { outline: 3px solid #b04a31; border-color: white; }
        .page.deck { padding: 0; }
        p, h2, h3 { margin: 0; font-size: 3px; line-height: 4px; }
        h2 { font-size: 4px; color: #111; line-height: 5px; }
        h2.thin { font-weight: 400; }
        h3 { text-align: center; color: #222; margin: 4px 0 3px; }
        .s2 { margin-top: 2px; }
        .s4 { margin-top: 4px; }
        .s6 { margin-top: 6px; }
        .end { margin-top: auto; padding-bottom: 8px; }
        mark { background: #2ff0f0; color: #146a6a; }
        table { border-collapse: collapse; font: inherit; line-height: 4px; align-self: center; color: #333; }
        td, th { border: 1px solid #bbb; padding: 0 1px; }
        th { background: #d9d9d9; }
        .c { text-align: center; }
        .t1 { width: 118px; margin-right: 3px; }
        .tall { margin-top: 3px; line-height: 5px; }
        .t2 { width: 158px; margin-right: 3px; }
        .t3 { width: 136px; margin: 6px 7px 4px 0; }
        .t3 td { line-height: 3px; }
        .cyan td, .hl td, td.hl { background: #ccfafa; }
        .pair { display: flex; gap: 56px; }
        .src { align-self: flex-end; padding-right: 14px; }
      </style>
      <span class="num">${n === "3" ? "" : n}</span>
      <div class="page ${n > 5 ? "deck" : ""}">${PAGES[n]}</div>
    `;
  }
}
customElements.define("slide-thumb", SlideThumb);

class StatusBar extends HTMLElement {
  constructor() {
    super();
    this.attachShadow({ mode: "open" });
  }

  connectedCallback() {
    this.shadowRoot.innerHTML = `
      <style>
        :host { display: flex; align-items: stretch; height: 22px; background: #f3f3f3; border-top: 1px solid #c6c6c6; color: #333; padding: 0 6px 0 8px; }
        span { display: flex; align-items: center; }
        button { border: 0; padding: 0; background: none; font: inherit; color: inherit; display: flex; align-items: center; justify-content: center; gap: 4px; }
        .spell { margin: 0 18px 0 19px; }
        .right { margin-left: auto; display: flex; }
        .notes { margin-right: 19px; }
        .views { display: flex; margin-left: 18px; }
        .views button { width: 40px; }
        .views .on { background: #c6c6c6; }
        .sign { width: 18px; font-size: 14px; }
        input { appearance: none; width: 100px; margin: 0; background: linear-gradient(#999, #999) center / 100% 1px no-repeat; }
        input::-webkit-slider-thumb { appearance: none; width: 5px; height: 11px; background: #555; }
        .pct { width: 44px; justify-content: center; margin-right: 4px; }
      </style>
      <span>Diapositiva 7 de 7</span>
      <button class="spell" aria-label="Revisión">${icon("spell")}</button>
      <span>Inglés (Estados Unidos)</span>
      <div class="right">
        <button class="notes">${icon("notes")}Notas</button>
        <button>${icon("comment")}Comentarios</button>
        <div class="views">
          <button class="on" aria-label="Normal">${icon("normal")}</button>
          <button aria-label="Clasificador">${icon("sorter")}</button>
          <button aria-label="Lectura">${icon("reading")}</button>
          <button aria-label="Presentación">${icon("show")}</button>
        </div>
        <button class="sign" aria-label="Alejar">−</button>
        <input type="range" min="0" max="100" value="59" aria-label="Zoom">
        <button class="sign" aria-label="Acercar">+</button>
        <span class="pct">148%</span>
        <button aria-label="Ajustar">${icon("fit")}</button>
      </div>
    `;
  }
}
customElements.define("status-bar", StatusBar);

class TaskApp extends HTMLElement {
  constructor() {
    super();
    this.attachShadow({ mode: "open" });
  }

  connectedCallback() {
    this.shadowRoot.innerHTML = `
      <style>
        :host { display: flex; flex: none; width: 43px; height: 40px; }
        button { flex: 1; padding: 0; border: 0; background: none; color: #111; font: inherit; display: flex; align-items: center; justify-content: center; white-space: nowrap; }
        :host([open]) { width: 84px; margin: 0 4px; }
        :host([open]) button { justify-content: flex-start; gap: 4px; padding: 0 0 0 4px; border-bottom: 2px solid #b83a78; }
        :host([active]) { width: 88px; }
        :host([active]) button { background: #f7fbf9; padding-left: 6px; }
      </style>
      <button aria-label="${this.textContent || this.getAttribute("icon")}">${icon(this.getAttribute("icon"))}<slot></slot></button>
    `;
  }
}
customElements.define("task-app", TaskApp);

class TaskBar extends HTMLElement {
  constructor() {
    super();
    this.attachShadow({ mode: "open" });
  }

  connectedCallback() {
    this.shadowRoot.innerHTML = `
      <style>
        :host { display: flex; align-items: center; height: 40px; color: #111; background: linear-gradient(90deg, #e1ece7, #dcefe5 40%, #d9f0e6 80%, #e9e2dc 87%, #ecdfda 90%, #d8efe6 95%); }
        button { border: 0; padding: 0; background: none; font: inherit; color: inherit; display: flex; align-items: center; justify-content: center; height: 40px; }
        .start { width: 48px; }
        .search { display: flex; align-items: center; width: 344px; height: 40px; box-sizing: border-box; background: white; border: 1px solid #c9cfcc; padding-left: 11px; }
        .search input { flex: 1; min-width: 0; border: 0; outline: 0; padding: 0 0 0 10px; font: inherit; font-size: 14px; background: none; }
        .search input::placeholder { color: #333; opacity: 1; }
        .sys { width: 48px; }
        .gap { width: 3px; }
        .tray { margin-left: auto; display: flex; align-items: center; height: 40px; }
        .temp { font-size: 14px; gap: 6px; margin-right: 16px; }
        .icons { display: flex; align-items: center; gap: 9px; }
        .esp { margin: 0 16px 0 12px; }
        .clock { flex-direction: column; line-height: 18px; margin-right: 18px; }
        .note { margin-right: 14px; }
      </style>
      <button class="start" aria-label="Inicio">${icon("windows")}</button>
      <label class="search">${icon("search")}<input type="text" placeholder="Escribe aquí para buscar" aria-label="Buscar">${icon("moose")}</label>
      <button class="sys" aria-label="Cortana">${icon("cortana")}</button>
      <button class="sys" aria-label="Vista de tareas">${icon("taskview")}</button>
      <div class="gap"></div>
      <task-app open icon="folder">TRABAJ...</task-app>
      <task-app icon="mail"></task-app>
      <task-app icon="netflix"></task-app>
      <task-app open icon="spotify">Spotify ...</task-app>
      <task-app icon="office"></task-app>
      <task-app icon="ubadge"></task-app>
      <task-app open icon="chrome">calcula...</task-app>
      <task-app open icon="autocad">AutoC...</task-app>
      <task-app open active icon="powerpoint">PowerP...</task-app>
      <task-app open icon="excel">Excel</task-app>
      <task-app open icon="word">Word</task-app>
      <task-app open icon="zoom">Zoom</task-app>
      <task-app open icon="pdf">TERCER...</task-app>
      <div class="tray">
        <button class="temp">${icon("cloud")}15°C</button>
        <div class="icons">
          ${["chevron", "meet", "onedrive", "sync", "battery", "wifi", "volume"].map(icon).join("")}
        </div>
        <button class="esp">ESP</button>
        <button class="clock"><span>02:45</span><span>14/10/2022</span></button>
        <button class="note" aria-label="Notificaciones">${icon("notify")}</button>
      </div>
    `;
  }
}
customElements.define("task-bar", TaskBar);

class PowerPoint extends HTMLElement {
  constructor() {
    super();
    this.attachShadow({ mode: "open" });
  }

  connectedCallback() {
    this.shadowRoot.innerHTML = `
      <style>
        :host { display: flex; flex-direction: column; height: 100vh; }
        header { position: relative; background: #b7472a; flex: none; }
        /* clouds drawn behind the window buttons */
        .art { position: absolute; right: 0; top: 0; width: 500px; height: 64px; }
        title-bar, tab-strip { position: relative; }
        main { flex: 1; min-height: 0; display: flex; background: #e6e6e6; }
        .list { width: 290px; padding: 0 20px 30px 12px; box-sizing: border-box; display: flex; flex-direction: column; justify-content: flex-end; gap: 20px; overflow: hidden; }
        .side { margin: 2px 4px 2px 0; }
        .work { flex: 1; min-width: 0; display: flex; flex-direction: column; border-left: 1px solid #b5b5b5; padding-left: 2px; }
        .top { flex: 1; min-height: 0; display: flex; }
        .stage { flex: 1; min-width: 0; background: white; padding: 120px 252px 0 260px; box-sizing: border-box; }
        .vert { display: flex; flex-direction: column; padding: 2px 1px 0 1px; }
        .vert scroll-bar { flex: 1; }
        .jump { border: 0; padding: 0; background: none; color: #555; height: 18px; display: flex; flex-direction: column; align-items: center; justify-content: center; gap: 1px; }
        .prev ui-icon { rotate: 180deg; }
        .bottom { margin: 0 18px 6px 1px; }
      </style>
      <header>
        <svg class="art" viewBox="0 0 500 64" aria-hidden="true">
          <g fill="#9b4028">
            <path d="M20 0h75c12 12-2 24-9 32 8 8-28 9-47 5-25-2-40-10-39-17 4-10 8-12 20-20z" opacity=".6"/>
            <path d="M115 0h80v46c-18-6-32-2-48 2-20 2-39 2-41-7 22 4 4-18 9-41z"/>
            <path d="M230 0h135c1 14-2 24-7 30 8 4 10-3 19 0 1 16-23 18-42 16-30-5-60-15-118-3 3-16 12-12 14-22z"/>
            <path d="M440 30c12-8 40 0 42 13-12 1-43 5-42-13zM470 0h30v52c-14-10-20-30-30-52zM395 0h22l-6 8z" opacity=".7"/>
          </g>
        </svg>
        <title-bar>CITAS DE LA NORMA EN PRIMERA PLANTA  -  PowerPoint</title-bar>
        <tab-strip></tab-strip>
      </header>
      <ribbon-bar></ribbon-bar>
      <main>
        <nav class="list" aria-label="Diapositivas">
          <slide-thumb number="3"></slide-thumb>
          <slide-thumb number="4"></slide-thumb>
          <slide-thumb number="5"></slide-thumb>
          <slide-thumb number="6"></slide-thumb>
          <slide-thumb number="7" selected></slide-thumb>
        </nav>
        <scroll-bar class="side" parts="306 521 0"></scroll-bar>
        <section class="work">
          <div class="top">
            <div class="stage"><slide-table ${AREA}></slide-table></div>
            <div class="vert">
              <scroll-bar parts="635 69 68"></scroll-bar>
              <button class="jump prev" aria-label="Diapositiva anterior">${icon("caret")}${icon("caret")}</button>
              <button class="jump" aria-label="Diapositiva siguiente">${icon("caret")}${icon("caret")}</button>
            </div>
          </div>
          <scroll-bar class="bottom" across parts="28 1494 36"></scroll-bar>
        </section>
      </main>
      <status-bar></status-bar>
      <task-bar></task-bar>
    `;
  }
}
customElements.define("power-point", PowerPoint);
</script>
</body>
</html>
